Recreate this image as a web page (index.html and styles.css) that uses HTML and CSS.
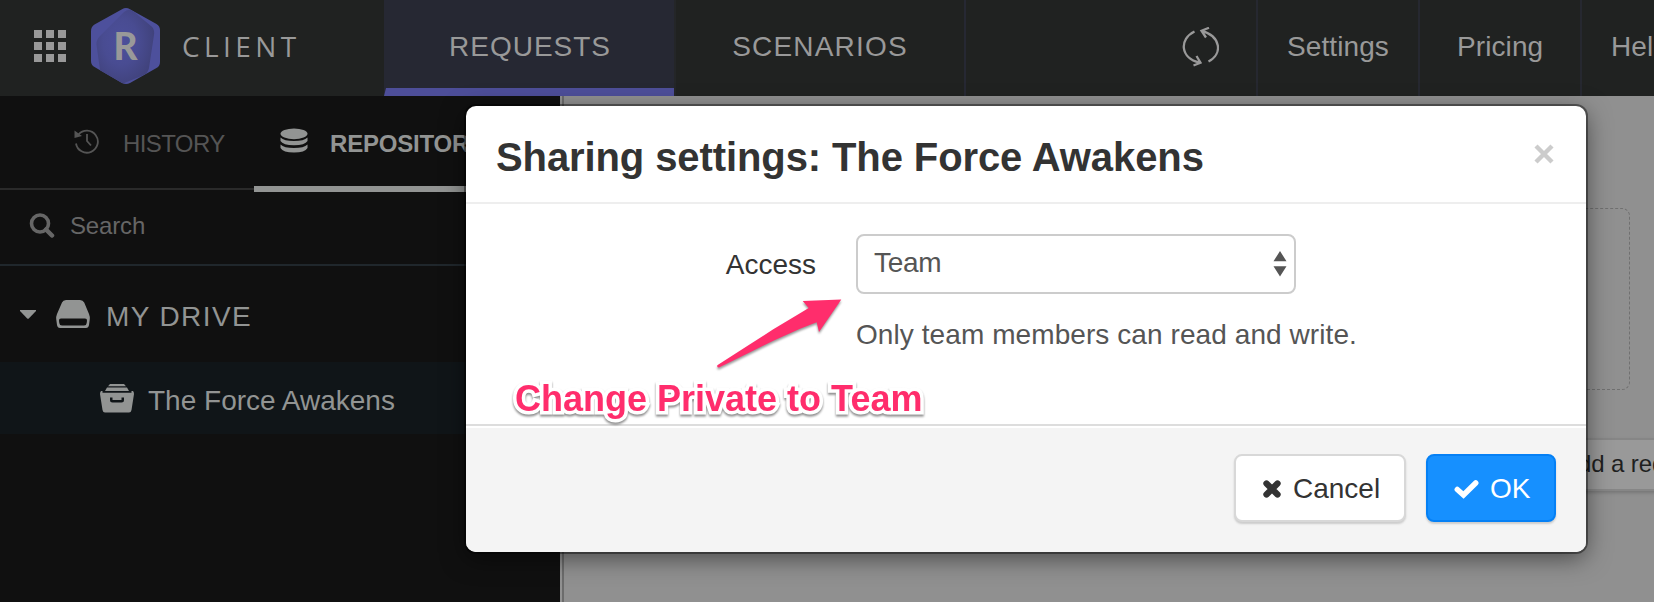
FILE: index.html
```html
<!DOCTYPE html>
<html lang="en">
<head>
<meta charset="utf-8">
<title>Client</title>
<link rel="stylesheet" href="styles.css">
</head>
<body>
<div class="app">
  <header class="topbar">
    <div class="brand">
      <svg class="grid-icon" viewBox="0 0 32 32"><path d="M0 0h8v8H0zM12 0h8v8h-8zM24 0h8v8h-8zM0 12h8v8H0zM12 12h8v8h-8zM24 12h8v8h-8zM0 24h8v8H0zM12 24h8v8h-8zM24 24h8v8h-8z" fill="#999"/></svg>
      <svg class="logo" viewBox="0 0 70 76">
        <defs><radialGradient id="g" cx=".42" cy=".42" r=".6"><stop offset="0" stop-color="#4c4f9b"/><stop offset=".5" stop-color="#494c92"/><stop offset="1" stop-color="#40427b"/></radialGradient></defs>
        <path d="M31 1.2Q35-1 39 1.2L65.500 16Q69 18 69 22V54Q69 58 65.500 60L39 75Q35 77 31 75L3.500 59Q0 57 0 53V23Q0 18.500 3.500 16.500Z" fill="#4d509c"/>
        <path d="M33 4Q38 0 42 3L60 18Q64 21 63 27L58 60Q57 65 53 67L26 78L10 69L5.500 37Q5 32 9 28Z" fill="url(#g)" clip-path="url(#hex)"/>
        <clipPath id="hex"><path d="M31 1.2Q35-1 39 1.2L65.500 16Q69 18 69 22V54Q69 58 65.500 60L39 75Q35 77 31 75L3.500 59Q0 57 0 53V23Q0 18.500 3.500 16.500Z"/></clipPath>
        <text x="34.500" y="51.500" text-anchor="middle" class="logo-letter">R</text>
      </svg>
      <span class="brand-name">CLIENT</span>
    </div>
    <nav class="tabs">
      <a class="tab tab-active">REQUESTS</a>
      <a class="tab tab-second">SCENARIOS</a>
    </nav>
    <div class="sync">
      <svg width="38" height="40" viewBox="0 0 38 40" fill="none" stroke="#999" stroke-width="2.300"><path d="M13.500 4.500C-2 12-1 31 18.500 35.500M20.500 3.800C40 9 42 27 27.500 34.500M28 .8L20.500 3.800L25 10.500M12.500 38.500L19.500 35.700L15.500 29"/></svg>
    </div>
    <a class="menu settings">Settings</a>
    <a class="menu pricing">Pricing</a>
    <a class="menu help">Help</a>
  </header>

  <div class="columns">
    <aside class="sidebar">
      <div class="side-tabs">
        <div class="side-tab history">
          <svg width="26" height="26" viewBox="0 0 26 26" fill="none" stroke="#555" stroke-width="1.800"><path d="M4.500 6.500A11 11 0 1 1 2 15.500M13 6V13L17 17.500"/><path d="M.5 2.500V10L8 8Z" fill="#555" stroke="none"/></svg>
          <span>HISTORY</span>
        </div>
        <div class="side-tab repository">
          <svg width="28" height="26" viewBox="0 0 28 26" fill="#929493"><ellipse cx="14" cy="5.800" rx="13.500" ry="5.400"/><path d="M.5 9.500Q4 13 14 13Q24 13 27.500 9.500V13Q25 17.200 14 17.200Q3 17.200 .5 13ZM.5 16.500Q4 20 14 20Q24 20 27.500 16.500V20Q25 24.500 14 24.500Q3 24.500 .5 20Z"/></svg>
          <span>REPOSITORY</span>
        </div>
      </div>
      <div class="search">
        <svg width="26" height="26" viewBox="0 0 26 26" fill="none" stroke="#666"><circle cx="11" cy="10.500" r="8.500" stroke-width="3.600"/><path d="M17 16.500L23 22.500" stroke-width="4.500" stroke-linecap="round"/></svg>
        <span>Search</span>
      </div>
      <div class="drive">
        <svg class="caret" width="16" height="9" viewBox="0 0 16 9"><path d="M0 0H16V1L8.800 8.500Q8 9.200 7.200 8.500L0 1Z" fill="#929493"/></svg>
        <svg class="disk" width="34" height="28" viewBox="0 0 34 28"><path fill-rule="evenodd" fill="#929493" d="M10 0H24Q27 0 28.200 2.500L33 14Q34 16.500 33.800 19L33 25Q32.500 28 30 28H4Q1.500 28 1 25L.2 19Q0 16.500 1 14L6 2.500Q7 0 10 0ZM5 18.500Q2.800 18.500 3 20.700L3.300 23Q3.500 25.500 6 25.500H28Q30.500 25.500 30.700 23L31 20.700Q31.200 18.500 29 18.500Z"/></svg>
        <span>MY DRIVE</span>
      </div>
      <div class="project">
        <svg width="34" height="29" viewBox="0 0 34 29" fill="#929493"><path d="M10 0H24L26 2.200H8ZM7 3.600H27L29 7H5Z"/><path fill-rule="evenodd" d="M1 7H2.500V8.700H31.500V7H33Q34 8 34 10L31.500 26Q31 28.500 29 28.500H5Q3 28.500 2.500 26L0 10Q0 8 1 7ZM10 13.500V16Q10 18.500 12.500 18.500H21.500Q24 18.500 24 16V13.500H21.500V16H12.500V13.500Z"/></svg>
        <span>The Force Awakens</span>
      </div>
    </aside>
    <main class="main">
      <div class="dropzone"></div>
      <div class="add-row"><span>Add a request</span></div>
    </main>
  </div>

  <section class="modal">
    <div class="modal-head">
      <h1>Sharing settings: The Force Awakens</h1>
      <svg class="close" width="20" height="20" viewBox="0 0 20 20"><path d="M2 2L18 18M18 2L2 18" stroke="#ccc" stroke-width="4.400"/></svg>
    </div>
    <div class="modal-body">
      <label class="label">Access</label>
      <div class="field">
        <div class="select"><span>Team</span>
          <svg width="14" height="26" viewBox="0 0 14 26" fill="#555"><path d="M.5 10.300L7 0L13.500 10.300ZM.5 15.300H13.500L7 25.600Z"/></svg>
        </div>
        <p class="hint">Only team members can read and write.</p>
      </div>
    </div>
    <div class="modal-foot">
      <button class="btn cancel"><svg width="20" height="20" viewBox="0 0 20 20"><path d="M4.500 4.500L15.500 15.500M15.500 4.500L4.500 15.500" stroke="#333" stroke-width="6.300" stroke-linecap="round"/></svg><span>Cancel</span></button>
      <button class="btn ok"><svg width="25" height="20" viewBox="0 0 25 20" fill="none"><path d="M3.300 10.500L9.500 16L21.700 4" stroke="#fff" stroke-width="5.500" stroke-linecap="round"/></svg><span>OK</span></button>
    </div>
    <svg class="arrow" width="132" height="76" viewBox="712 296 132 76"><path d="M841.300 299.500L802.700 301L808.700 308L796.700 315.300L773.300 329.300L750 344.300L717.300 365.300Q716.800 367.800 719 367.600L750 352.300L773.300 340.700L800 328.700L816.700 322.300L819 332Z" fill="#ff2d6c"/></svg>
    <div class="note">Change Private to Team</div>
  </section>
</div>
</body>
</html>
```
FILE: styles.css
```css
* { box-sizing: border-box; }
body { margin: 0; font-family: "Liberation Sans", Arial, sans-serif; font-size: 28px; white-space: nowrap; }
svg { display: block; flex: none; }
.app { position: relative; width: 1654px; height: 602px; overflow: hidden; background: #101010; }

.topbar { display: flex; height: 96px; background: #202221; color: #999; }
.brand { width: 384px; display: flex; align-items: center; padding: 0 0 4px 34px; }
.grid-icon { width: 32px; height: 32px; }
.logo { width: 70px; height: 76px; margin-left: 25px; }
.logo-letter { font: 900 37px Lato, sans-serif; fill: #999; }
.brand-name { margin-left: 21px; font-family: "Open Sans", sans-serif; letter-spacing: 4.4px; padding-bottom: 1px; }
.tabs { display: flex; }
.tab { width: 290px; display: flex; align-items: center; justify-content: center; padding-bottom: 2px; letter-spacing: 1px; }
.tab-active { background: #262833; border-left: 2px solid #262833; border-bottom: 8px solid #4d4e99; padding: 6px 0 0; }
.tab-second { width: 292px; border-left: 2px solid #242628; border-right: 2px solid #262833; letter-spacing: 1.2px; }
.sync { flex: 1; padding: 27px 0 0 215px; }
.menu { display: flex; align-items: center; padding: 0 0 2px 29px; border-left: 2px solid #262830; letter-spacing: .1px; }
.settings, .pricing { width: 162px; }
.pricing { padding-left: 37px; }
.help { width: 74px; padding-left: 29px; }

.columns { display: flex; height: 506px; }
.sidebar { width: 560px; color: #929493; }
.side-tabs { display: flex; height: 96px; font-size: 24px; }
.side-tab { display: flex; align-items: center; }
.history { width: 254px; height: 94px; padding: 3px 0 0 74px; gap: 23px; color: #555; border-bottom: 2px solid #2a2a2a; letter-spacing: -.6px; }
.repository { width: 306px; height: 96px; padding: 6px 0 0 26px; gap: 22px; font-weight: 700; border-bottom: 6px solid #929493; letter-spacing: -.2px; }
.history svg { margin-bottom: 6px; }
.repository svg { margin-bottom: 7px; }
.search { height: 74px; display: flex; align-items: center; gap: 15px; padding: 0 0 5px 29px; font-size: 24px; color: #666; border-bottom: 2px solid #20272c; letter-spacing: -.15px; }
.drive { height: 96px; display: flex; align-items: center; padding: 6px 0 0 20px; letter-spacing: 1.4px; }
.disk { margin: 0 16px 6px 20px; }
.caret { margin-bottom: 5px; }
.project { height: 72px; display: flex; align-items: center; gap: 14px; padding: 6px 0 0 100px; background: #101518; }
.project svg { margin-bottom: 5px; }

.main { width: 1094px; background: #909090; border-left: 2px solid #929292; box-shadow: inset 2px 0 #6c6c6c; display: flex; flex-direction: column; align-items: flex-start; }
.dropzone { width: 1037px; height: 182px; margin: 112px 0 0 31px; border: 1px dashed #707070; border-radius: 8px; }
.add-row { width: 300px; height: 53px; margin: 48px 0 0 958px; padding: 0 0 2px 40px; display: flex; align-items: center; background: #999; border: 2px solid #868686; box-shadow: 0 2px 3px #777; font-size: 24px; color: #1f1f1f; letter-spacing: -.1px; }

.modal { position: absolute; left: 466px; top: 106px; width: 1120px; height: 446px; border-radius: 10px; background: #fff; box-shadow: 0 0 0 2px rgba(0,0,0,.4), 0 6px 24px rgba(0,0,0,.5); color: #333; }
.modal-head { height: 98px; padding: 0 32px 0 30px; display: flex; align-items: center; justify-content: space-between; border-bottom: 2px solid #eee; }
.modal-head h1 { margin: 6px 0 0; font-size: 40px; font-weight: 700; letter-spacing: -.1px; }
.modal-body { height: 220px; display: flex; padding-top: 30px; }
.label { width: 350px; height: 60px; display: flex; align-items: center; justify-content: flex-end; padding-top: 2px; }
.field { margin-left: 40px; }
.select { width: 440px; height: 60px; padding: 0 7px 2px 16px; display: flex; align-items: center; justify-content: space-between; border: 2px solid #ccc; border-radius: 8px; color: #555; }
.select span { letter-spacing: -.3px; }
.select svg { margin-top: 2px; }
.hint { margin: 25px 0 0; line-height: 32px; letter-spacing: .08px; color: #555; }
.modal-foot { height: 128px; padding: 28px 30px 0; display: flex; justify-content: flex-end; gap: 20px; border-top: 2px solid #ddd; box-shadow: inset 0 2px #fff; background: #f4f4f4; border-radius: 0 0 10px 10px; }
.btn { height: 68px; display: flex; align-items: center; font: 28px "Liberation Sans", Arial, sans-serif; border-radius: 8px; padding: 2px 0 0; }
.cancel { width: 172px; padding-left: 26px; gap: 11px; background: #fff; border: 2px solid #d8d8d8; box-shadow: 0 2px 2px #ccc; color: #333; }
.ok { width: 130px; padding-left: 26px; gap: 11px; background: #1690ff; border: 2px solid #0580f5; box-shadow: 0 2px 2px #ccc; color: #fff; }
.arrow { position: absolute; left: 246px; top: 190px; filter: drop-shadow(0 2px 1px rgba(0,0,0,.4)); }
.note { position: absolute; left: 49px; top: 272px; line-height: 42px; font-size: 36px; font-weight: 700; color: #ff2d6c; -webkit-text-stroke: 7px #fff; paint-order: stroke fill; filter: drop-shadow(0 2px 1px rgba(0,0,0,.45)); }
```
